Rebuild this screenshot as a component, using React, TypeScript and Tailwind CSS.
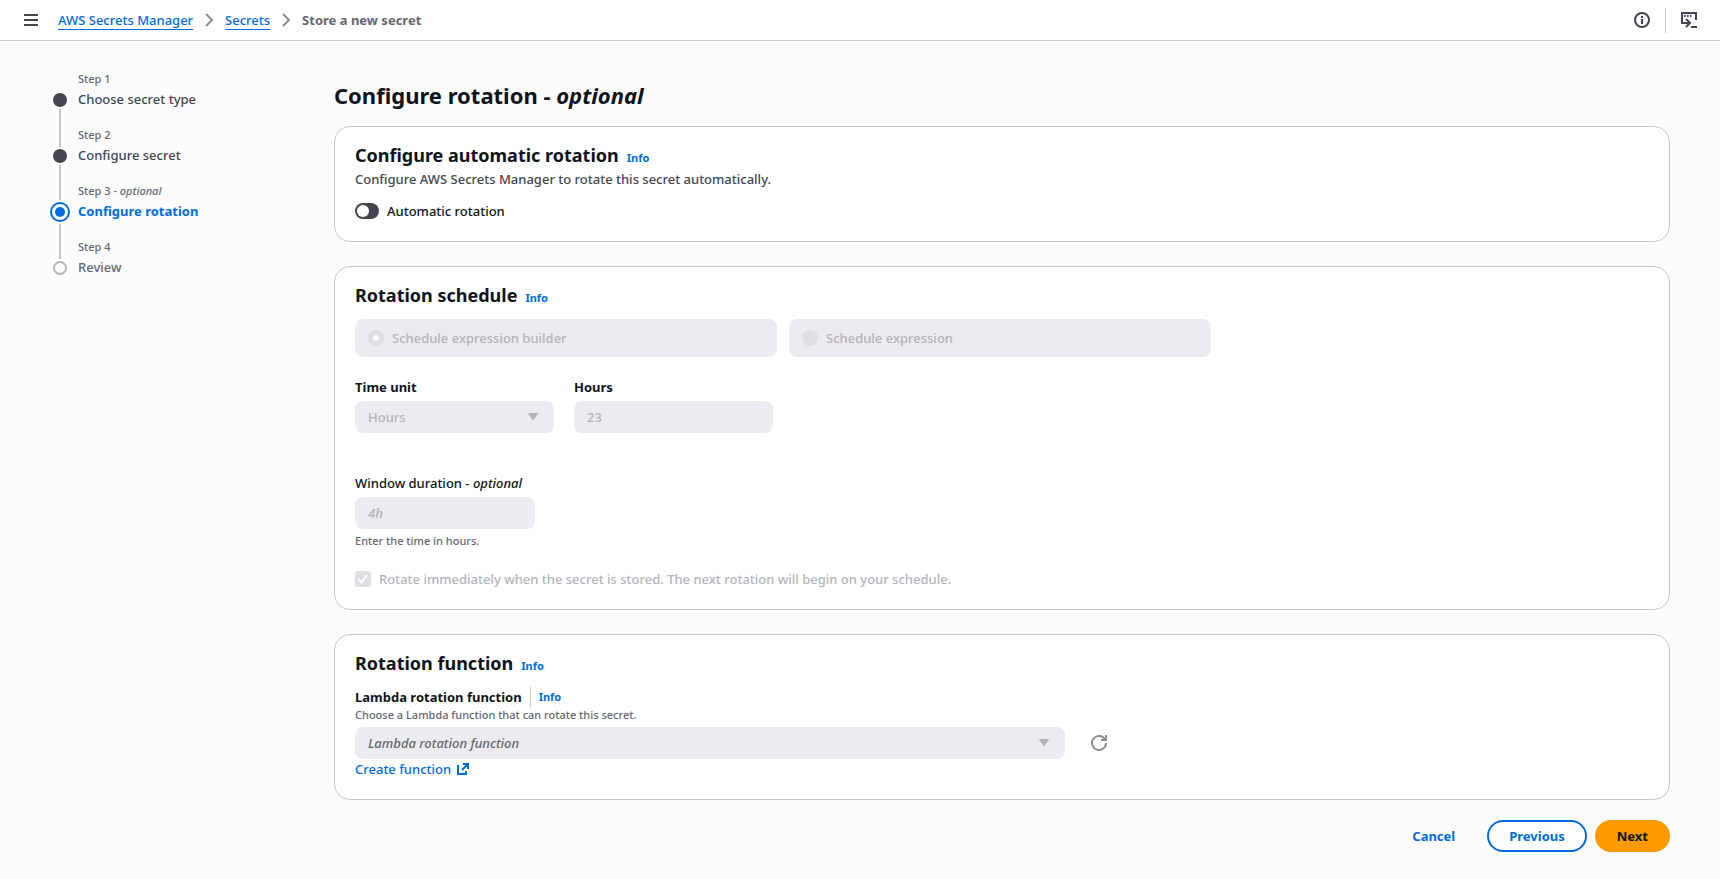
import { useState } from "react";
import type { ReactNode } from "react";

interface IStep {
    label: string;
    title: string;
    optional?: boolean;
    status: "done" | "active" | "todo";
}

const steps: IStep[] = [
    { label: "Step 1", title: "Choose secret type", status: "done" },
    { label: "Step 2", title: "Configure secret", status: "done" },
    { label: "Step 3", title: "Configure rotation", optional: true, status: "active" },
    { label: "Step 4", title: "Review", status: "todo" },
];

function Chevron() {
    return (
        <svg viewBox="0 0 16 16" className="h-4 w-4 text-[#8c8c94]" fill="none" stroke="currentColor" strokeWidth="2" aria-hidden="true">
            <path d="M5 2l6 6-6 6" />
        </svg>
    );
}

function Caret() {
    return (
        <svg viewBox="0 0 16 16" className="pointer-events-none absolute right-[13px] top-2 h-4 w-4 text-[#b4b4bb]" fill="currentColor" aria-hidden="true">
            <path d="M3.5 4.5h9L8 11z" stroke="currentColor" strokeLinejoin="round" />
        </svg>
    );
}

function InfoLink() {
    return (
        <a href="#info" className="text-[11px] leading-4 font-bold text-[#006ce0]">Info</a>
    );
}

function Card({ title, children }: { title: string; children: ReactNode }) {
    return (
        <section className="rounded-2xl border border-[#c6c6cd] bg-white px-5 pt-4 pb-5">
            <div className="flex items-baseline gap-2">
                <h2 className="text-[18px] leading-6 font-bold">{title}</h2>
                <InfoLink />
            </div>
            {children}
        </section>
    );
}

function StepMarker({ status, first, last }: { status: IStep["status"]; first: boolean; last: boolean }) {
    return (
        <div className="flex w-5 flex-col items-center gap-[2px]">
            <span className={`w-[2px] ${status === "active" ? "h-[17px]" : "h-5"} ${first ? "" : "bg-[#c6c6cd]"}`} />
            {status === "done" && <span className="h-[14px] w-[14px] rounded-full bg-[#424650]" />}
            {status === "active" && (
                <span className="flex h-5 w-5 items-center justify-center rounded-full border-2 border-[#006ce0]">
                    <span className="h-[10px] w-[10px] rounded-full bg-[#006ce0]" />
                </span>
            )}
            {status === "todo" && <span className="h-[14px] w-[14px] rounded-full border-2 border-[#b4b4bb] bg-white" />}
            <span className={`w-[2px] flex-1 ${last ? "" : "bg-[#c6c6cd]"}`} />
        </div>
    );
}

function Steps() {
    return (
        <nav aria-label="Steps" className="w-[284px] shrink-0 pt-[30px]">
            <ol>
                {steps.map((step, i) => (
                    <li key={step.label} className="flex h-14 gap-2" aria-current={step.status === "active" ? "step" : undefined}>
                        <StepMarker status={step.status} first={i === 0} last={i === steps.length - 1} />
                        <div className="flex flex-col gap-[2px]">
                            <span className="text-[11px] leading-4 text-[#656871]">
                                {step.label}
                                {step.optional && <> - <i>optional</i></>}
                            </span>
                            <span
                                className={
                                    step.status === "active"
                                        ? "leading-5 font-bold text-[#006ce0]"
                                        : step.status === "todo"
                                            ? "leading-5 text-[#656871]"
                                            : "leading-5 text-[#424650]"
                                }
                            >
                                {step.title}
                            </span>
                        </div>
                    </li>
                ))}
            </ol>
        </nav>
    );
}

function Header() {
    return (
        <header className="flex h-[41px] items-center border-b border-[#c6c6cd] bg-white px-[23px]">
            <button type="button" aria-label="Open navigation" className="text-[#424650]">
                <svg viewBox="0 0 16 16" className="h-4 w-4" fill="none" stroke="currentColor" strokeWidth="2">
                    <path d="M1 3h14M1 8h14M1 13h14" />
                </svg>
            </button>
            <nav aria-label="Breadcrumbs" className="ml-[19px] flex items-center gap-2">
                <a href="#home" className="text-[#006ce0] underline underline-offset-4">AWS Secrets Manager</a>
                <Chevron />
                <a href="#secrets" className="text-[#006ce0] underline underline-offset-4">Secrets</a>
                <Chevron />
                <span className="font-bold text-[#656871]">Store a new secret</span>
            </nav>
            <div className="ml-auto flex items-center text-[#424650]">
                <button type="button" aria-label="Open help panel">
                    <svg viewBox="0 0 16 16" className="h-4 w-4" fill="none" stroke="currentColor" strokeWidth="2">
                        <circle cx="8" cy="8" r="7" />
                        <path d="M8 7v5M8 4v2" />
                    </svg>
                </button>
                <span className="mx-[15px] h-[25px] w-px bg-[#c6c6cd]" />
                <button type="button" aria-label="Open CloudShell">
                    <svg viewBox="0 0 16 16" className="h-4 w-4" fill="none" stroke="currentColor" strokeWidth="2">
                        <path d="M9 11H1V1h14v7M10 15h6M5 7l4 4-4 4" />
                        <path d="M3 4h2M6 4h2M9 4h2" strokeDasharray="1.6 4" />
                    </svg>
                </button>
            </div>
        </header>
    );
}

export default function App() {
    const [automatic, setAutomatic] = useState(false);

    return (
        <div className="min-h-screen bg-[#fcfcfd] font-['Noto_Sans',sans-serif] text-[13px] leading-5 font-medium text-[#0f141a]">
            <Header />
            <div className="flex px-[50px]">
                <Steps />
                <main className="min-w-0 flex-1 pt-[38px] pb-6">
                    <h1 className="mb-[15px] text-[22px] leading-8 font-bold">
                        Configure rotation - <i>optional</i>
                    </h1>
                    <form id="rotation" className="flex flex-col gap-6" onSubmit={(e) => e.preventDefault()}>
                        <Card title="Configure automatic rotation">
                            <p className="mt-[2px] text-[#424650]">
                                Configure AWS Secrets Manager to rotate this secret automatically.
                            </p>
                            <label className="mt-3 flex w-fit items-center gap-2">
                                <input
                                    type="checkbox"
                                    role="switch"
                                    checked={automatic}
                                    onChange={() => setAutomatic(!automatic)}
                                    className="h-4 w-6 appearance-none rounded-full bg-[#424650] p-[2px] before:block before:h-3 before:w-3 before:rounded-full before:bg-white checked:bg-[#006ce0] checked:before:ml-auto"
                                />
                                Automatic rotation
                            </label>
                        </Card>

                        <Card title="Rotation schedule">
                            <div className="mt-3 grid max-w-[856px] grid-cols-2 gap-3 text-[#b4b4bb]">
                                <label className="flex h-[38px] items-center gap-2 rounded-lg bg-[#ebebf0] px-[13px]">
                                    <input type="radio" name="schedule" disabled defaultChecked className="h-4 w-4 appearance-none rounded-full bg-[#dedee3] checked:border-[5px] checked:border-[#dedee3] checked:bg-white" />
                                    Schedule expression builder
                                </label>
                                <label className="flex h-[38px] items-center gap-2 rounded-lg bg-[#ebebf0] px-[13px]">
                                    <input type="radio" name="schedule" disabled className="h-4 w-4 appearance-none rounded-full bg-[#dedee3]" />
                                    Schedule expression
                                </label>
                            </div>

                            <div className="mt-5 grid max-w-[418px] grid-cols-2 gap-5">
                                <div className="flex flex-col gap-1">
                                    <label htmlFor="unit" className="font-bold">Time unit</label>
                                    <div className="relative">
                                        <select id="unit" disabled className="block h-8 w-full appearance-none rounded-lg bg-[#ebebf0] px-[13px] text-[#b4b4bb] opacity-100">
                                            <option>Hours</option>
                                        </select>
                                        <Caret />
                                    </div>
                                </div>
                                <div className="flex flex-col gap-1">
                                    <label htmlFor="hours" className="font-bold">Hours</label>
                                    <input id="hours" disabled defaultValue="23" className="h-8 w-full rounded-lg bg-[#ebebf0] px-[13px] text-[#b4b4bb]" />
                                </div>
                            </div>

                            <div className="mt-10 flex flex-col gap-1">
                                <label htmlFor="duration">
                                    Window duration - <i>optional</i>
                                </label>
                                <input id="duration" disabled placeholder="4h" className="h-8 w-[180px] rounded-lg bg-[#ebebf0] px-[13px] placeholder:text-[#b4b4bb] placeholder:italic" />
                                <p className="text-[11px] leading-4 text-[#656871]">Enter the time in hours.</p>
                            </div>

                            <div className="mt-5 flex items-center gap-2 text-[#b4b4bb]">
                                <span className="relative h-4 w-4">
                                    <input id="immediately" type="checkbox" disabled defaultChecked className="block h-4 w-4 appearance-none rounded-[3px] bg-[#dedee3]" />
                                    <svg viewBox="0 0 16 16" className="pointer-events-none absolute inset-0 h-4 w-4 text-white" fill="none" stroke="currentColor" strokeWidth="2" aria-hidden="true">
                                        <path d="M3.5 8l3 3.5 5.500-7.500" />
                                    </svg>
                                </span>
                                <label htmlFor="immediately">
                                    Rotate immediately when the secret is stored. The next rotation will begin on your schedule.
                                </label>
                            </div>
                        </Card>

                        <Card title="Rotation function">
                            <div className="mt-3 flex h-5 items-center">
                                <label htmlFor="lambda" className="font-bold">Lambda rotation function</label>
                                <span className="mx-2 h-5 w-px bg-[#c6c6cd]" />
                                <InfoLink />
                            </div>
                            <p className="text-[11px] leading-4 text-[#656871]">Choose a Lambda function that can rotate this secret.</p>
                            <div className="mt-1 flex items-center gap-[26px]">
                                <div className="relative w-full max-w-[710px]">
                                    <select id="lambda" disabled className="block h-8 w-full appearance-none rounded-lg bg-[#ebebf0] px-[13px] text-[#656871] italic opacity-100">
                                        <option>Lambda rotation function</option>
                                    </select>
                                    <Caret />
                                </div>
                                <button type="button" disabled aria-label="Refresh functions" className="text-[#8c8c94]">
                                    <svg viewBox="0 0 16 16" className="h-4 w-4" fill="none" stroke="currentColor" strokeWidth="2">
                                        <path d="M15 8a7 7 0 1 1-2.500-5.400L14 4.500M15 0v5h-5" />
                                    </svg>
                                </button>
                            </div>
                            <a href="#create" className="flex w-fit items-center gap-1 text-[#006ce0]">
                                Create function
                                <svg viewBox="0 0 16 16" className="h-4 w-4" fill="none" stroke="currentColor" strokeWidth="2" aria-hidden="true">
                                    <path d="M3 4v9h8v-3M8 3h5v5M13 3L7 9" />
                                </svg>
                            </a>
                        </Card>
                    </form>

                    <div className="mt-5 flex items-center justify-end gap-2 font-bold">
                        <button type="button" className="mr-1 h-8 px-5 text-[#006ce0]">Cancel</button>
                        <button type="button" className="h-8 rounded-full border-2 border-[#006ce0] bg-white px-5 text-[#006ce0]">Previous</button>
                        <button type="submit" form="rotation" className="h-8 rounded-full bg-[#ff9900] px-[22px]">Next</button>
                    </div>
                </main>
            </div>
        </div>
    );
}
